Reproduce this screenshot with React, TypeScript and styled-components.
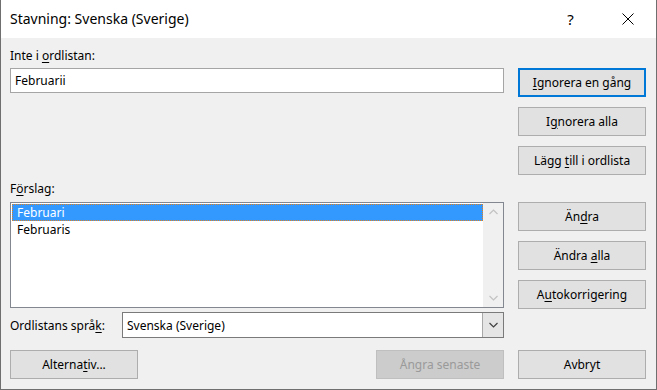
import React from "react";
import styled, { createGlobalStyle } from "styled-components";

const GlobalStyle = createGlobalStyle`
  html, body {
    margin: 0;
    padding: 0;
    background: #ffffff;
  }
  body {
    font-family: "Noto Sans", "Open Sans", sans-serif;
    font-size: 12px;
    color: #000000;
  }
`;

const Window = styled.div`
  width: 657px;
  height: 390px;
  box-sizing: border-box;
  border: 1px solid #6f6f6f;
  border-top: none;
  background: #f0f0f0;
  display: flex;
  flex-direction: column;
`;

const TitleBar = styled.div`
  height: 38px;
  background: #ffffff;
  display: flex;
  align-items: center;
  padding-left: 9px;
`;

const Title = styled.div`
  flex: 1;
  font-size: 14px;
  margin-top: -1px;
`;

const TitleButton = styled.div`
  width: 57px;
  height: 38px;
  display: flex;
  align-items: center;
  justify-content: center;
  font-size: 15px;
`;

const Body = styled.div`
  display: grid;
  grid-template-columns: 494px 128px;
  grid-template-rows: 20px 107px 27px 107px 41px 29px;
  column-gap: 14px;
  padding: 10px 0 0 9px;
`;

const Label = styled.div<{ $end?: boolean }>`
  line-height: 16px;
  align-self: ${(p) => (p.$end ? "end" : "start")};
  margin-bottom: ${(p) => (p.$end ? "5px" : "0")};
`;

const TextInput = styled.div`
  height: 25px;
  box-sizing: border-box;
  background: #ffffff;
  border: 1px solid #a5a5a5;
  padding-left: 4px;
  display: flex;
  align-items: center;
`;

const ButtonStack = styled.div`
  display: flex;
  flex-direction: column;
  gap: 10px;
`;

const Button = styled.div<{ $focused?: boolean; $disabled?: boolean }>`
  width: 128px;
  height: 29px;
  box-sizing: border-box;
  display: flex;
  align-items: center;
  justify-content: center;
  background: ${(p) => (p.$disabled ? "#cccccc" : "#e1e1e1")};
  border: ${(p) => (p.$focused ? "2px solid #0078d7" : p.$disabled ? "1px solid #bfbfbf" : "1px solid #adadad")};
  color: ${(p) => (p.$disabled ? "#9a9a9a" : "#000000")};
  white-space: pre;
`;

const U = styled.span`
  text-decoration: underline;
  text-underline-offset: 2px;
`;

const ListBox = styled.div`
  height: 106px;
  box-sizing: border-box;
  border: 1px solid #828790;
  background: #ffffff;
  display: flex;
`;

const ListItems = styled.div`
  flex: 1;
  padding: 1px 0 0 1px;
`;

const ListItem = styled.div<{ $selected?: boolean }>`
  height: 17px;
  box-sizing: border-box;
  line-height: 15px;
  padding-left: 4px;
  background: ${(p) => (p.$selected ? "#3399ff" : "transparent")};
  color: ${(p) => (p.$selected ? "#ffffff" : "#000000")};
  border: 1px ${(p) => (p.$selected ? "dotted #e0801e" : "solid transparent")};
`;

const ScrollBar = styled.div`
  width: 20px;
  background: #f0f0f0;
  display: flex;
  flex-direction: column;
  justify-content: space-between;
  align-items: center;
  padding: 6px 0;
`;

const ComboRow = styled.div`
  display: flex;
  align-items: center;
  margin-top: 3px;
  height: 26px;
`;

const ComboLabel = styled.div`
  width: 112px;
`;

const Combo = styled.div`
  flex: 1;
  height: 26px;
  box-sizing: border-box;
  border: 1px solid #7a7a7a;
  background: #ffffff;
  display: flex;
`;

const ComboText = styled.div`
  flex: 1;
  display: flex;
  align-items: center;
  padding-left: 4px;
`;

const ComboArrow = styled.div`
  width: 20px;
  background: #e5e5e5;
  border-left: 1px solid #a8a8a8;
  display: flex;
  align-items: center;
  justify-content: center;
`;

const BottomLeft = styled.div`
  display: flex;
  justify-content: space-between;
`;

const Chevron = ({ up, color }: { up?: boolean; color: string }) => (
  <svg width="9" height="6" viewBox="0 0 9 6">
    <path d={up ? "M0.5 5 L4.5 1 L8.5 5" : "M0.5 1 L4.5 5 L8.5 1"} fill="none" stroke={color} strokeWidth="1.2" />
  </svg>
);

export default function App() {
  return (
    <>
      <GlobalStyle />
      <Window>
        <TitleBar>
          <Title>Stavning: Svenska (Sverige)</Title>
          <TitleButton>?</TitleButton>
          <TitleButton>
            <svg width="12" height="12" viewBox="0 0 12 12">
              <path d="M0.5 0.5 L11.5 11.5 M11.5 0.5 L0.5 11.5" stroke="#000" strokeWidth="1" />
            </svg>
          </TitleButton>
        </TitleBar>
        <Body>
          <Label>
            Inte i <U>o</U>rdlistan:
          </Label>
          <div />
          <div>
            <TextInput>Februarii</TextInput>
          </div>
          <ButtonStack>
            <Button $focused>
              <span>
                <U>I</U>gnorera en gång
              </span>
            </Button>
            <Button>
              <span>
                I<U>g</U>norera alla
              </span>
            </Button>
            <Button>
              <span>
                Lägg <U>t</U>ill i ordlista
              </span>
            </Button>
          </ButtonStack>
          <Label $end>
            F<U>ö</U>rslag:
          </Label>
          <div />
          <ListBox>
            <ListItems>
              <ListItem $selected>Februari</ListItem>
              <ListItem>Februaris</ListItem>
            </ListItems>
            <ScrollBar>
              <Chevron up color="#c2c2c2" />
              <Chevron color="#c2c2c2" />
            </ScrollBar>
          </ListBox>
          <ButtonStack>
            <Button>
              <span>
                Än<U>d</U>ra
              </span>
            </Button>
            <Button>
              <span>
                Ändra <U>a</U>lla
              </span>
            </Button>
            <Button>
              <span>
                A<U>u</U>tokorrigering
              </span>
            </Button>
          </ButtonStack>
          <ComboRow>
            <ComboLabel>
              Ordlistans språ<U>k</U>:
            </ComboLabel>
            <Combo>
              <ComboText>Svenska (Sverige)</ComboText>
              <ComboArrow>
                <Chevron color="#404040" />
              </ComboArrow>
            </Combo>
          </ComboRow>
          <div />
          <BottomLeft>
            <Button>
              <span>
                Alterna<U>t</U>iv...
              </span>
            </Button>
            <Button $disabled>Ångra senaste</Button>
          </BottomLeft>
          <Button>Avbryt</Button>
        </Body>
      </Window>
    </>
  );
}
